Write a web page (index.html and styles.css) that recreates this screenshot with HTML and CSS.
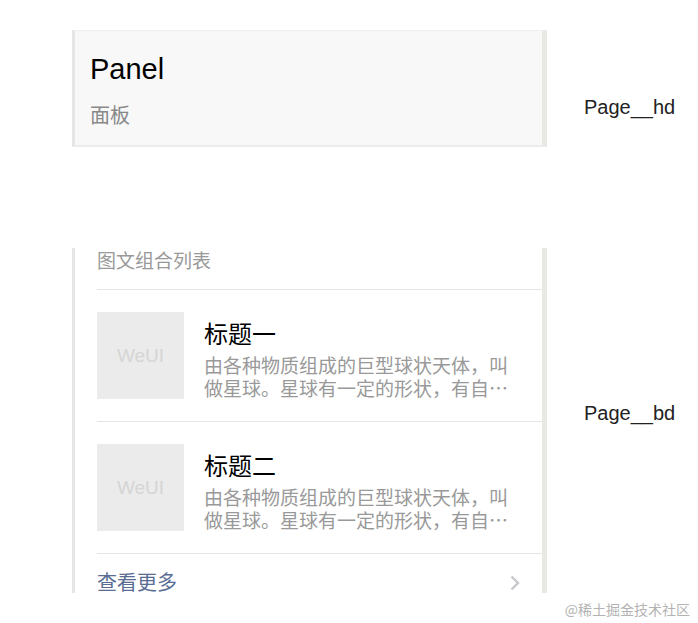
FILE: index.html
```html
<!DOCTYPE html>
<html lang="zh">
<head>
<meta charset="utf-8">
<title>Panel</title>
<link rel="stylesheet" href="styles.css">
</head>
<body>
<div class="page">
  <div class="row row-hd">
    <div class="col panel-hd">
      <h1 class="page-title">Panel</h1>
      <p class="page-desc">面板</p>
    </div>
    <div class="label label-hd">Page__hd</div>
  </div>
  <div class="row row-bd">
    <div class="col panel-bd">
      <div class="bd-hd">图文组合列表</div>
      <div class="media">
        <div class="thumb">WeUI</div>
        <div class="media-body">
          <div class="media-title">标题一</div>
          <div class="media-desc">由各种物质组成的巨型球状天体，叫做星球。星球有一定的形状，有自己的运行轨道。</div>
        </div>
      </div>
      <div class="media">
        <div class="thumb">WeUI</div>
        <div class="media-body">
          <div class="media-title">标题二</div>
          <div class="media-desc">由各种物质组成的巨型球状天体，叫做星球。星球有一定的形状，有自己的运行轨道。</div>
        </div>
      </div>
      <div class="bd-ft">
        <span class="more">查看更多</span>
        <svg class="chev" width="10" height="16" viewBox="0 0 10 16"><polyline points="1.5,1.5 8,8 1.5,14.5" fill="none" stroke="#c7c7cc" stroke-width="2.4"/></svg>
      </div>
    </div>
    <div class="label label-bd">Page__bd</div>
  </div>
  <div class="watermark">@稀土掘金技术社区</div>
</div>
</body>
</html>
```
FILE: styles.css
```css
html, body {
  margin: 0;
  padding: 0;
  background: #fff;
}
body {
  font-family: "Liberation Sans", "Noto Sans CJK SC", sans-serif;
}
.page {
  padding-left: 72px;
}
.row {
  display: flex;
  align-items: flex-start;
}
.row-hd {
  padding-top: 30px;
}
.row-bd {
  margin-top: 101px;
}
.col {
  width: 467px;
  border-left: 3px solid #e6e6e6;
  border-right: 5px solid #e8e8e5;
  flex: none;
}
.panel-hd {
  background: #f8f8f8;
  border-top: 1px solid #efefef;
  border-bottom: 2px solid #ececec;
  padding: 18px 15px 16px;
  box-sizing: content-box;
  width: 437px;
}
.page-title {
  margin: 0;
  font-family: "Liberation Sans", sans-serif;
  font-weight: 400;
  font-size: 29px;
  line-height: 40px;
  color: #000;
}
.page-desc {
  margin: 12px 0 0;
  font-family: "Noto Sans CJK SC", sans-serif;
  font-size: 20px;
  line-height: 28px;
  color: #888;
}
.label {
  margin-left: 37px;
  font-family: "Liberation Sans", sans-serif;
  font-size: 20px;
  line-height: 24px;
  color: #222;
  white-space: nowrap;
}
.label-hd {
  margin-top: 65px;
}
.label-bd {
  margin-top: 153px;
}
.panel-bd {
  height: 345px;
  overflow: hidden;
  background: #fff;
  font-family: "Noto Sans CJK SC", sans-serif;
}
.bd-hd {
  margin-left: 22px;
  padding: 0 0 18px;
  border-bottom: 1px solid #e5e5e5;
  font-size: 19px;
  line-height: 23px;
  color: #999;
}
.media {
  margin-left: 22px;
  padding: 22px 22px 22px 0;
  border-bottom: 1px solid #e5e5e5;
  display: flex;
  align-items: flex-start;
}
.thumb {
  flex: none;
  width: 87px;
  height: 87px;
  margin-right: 20px;
  background: #ebebeb;
  color: #d5d5d5;
  font-family: "Liberation Sans", sans-serif;
  font-size: 19px;
  display: flex;
  align-items: center;
  justify-content: center;
}
.media-body {
  flex: 1;
  min-width: 0;
  padding-top: 4px;
}
.media-title {
  font-size: 24px;
  line-height: 34px;
  color: #000;
  white-space: nowrap;
  overflow: hidden;
  text-overflow: ellipsis;
}
.media-desc {
  margin-top: 3px;
  font-size: 19px;
  line-height: 23px;
  color: #999;
  display: -webkit-box;
  -webkit-line-clamp: 2;
  -webkit-box-orient: vertical;
  overflow: hidden;
}
.bd-ft {
  margin-left: 22px;
  padding: 14px 22px 0 0;
  display: flex;
  align-items: center;
  justify-content: space-between;
}
.more {
  font-size: 20px;
  line-height: 28px;
  color: #586c94;
}
.chev {
  display: block;
  margin-top: 2px;
}
.watermark {
  margin-top: 6px;
  padding-right: 8px;
  text-align: right;
  font-family: "Noto Sans CJK SC", sans-serif;
  font-size: 14px;
  line-height: 20px;
  color: #b3b3b3;
}
```
